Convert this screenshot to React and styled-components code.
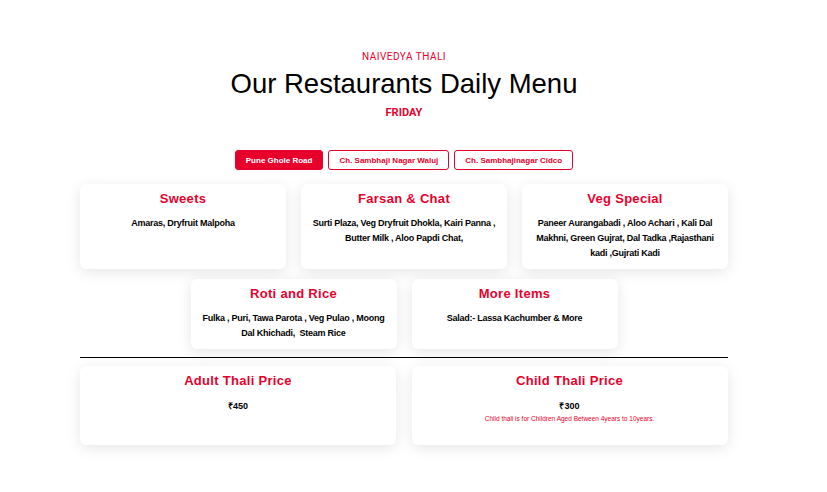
import React from "react";
import styled, { createGlobalStyle } from "styled-components";

const RED = "#e8002d";

const Global = createGlobalStyle`
  html, body { margin: 0; padding: 0; background: #fff; }
  body { font-family: "Liberation Sans", Arial, sans-serif; color: #000; }
`;

const Shell = styled.div`
  padding-right: 19px;
`;

const Page = styled.div`
  width: 648px;
  margin: 0 auto;
  padding-top: 51px;
  padding-bottom: 40px;
`;

const Header = styled.header`
  text-align: center;
`;

const Eyebrow = styled.div`
  font-family: Roboto, sans-serif;
  font-size: 10px;
  line-height: 12px;
  color: ${RED};
  letter-spacing: 0.5px;
`;

const Title = styled.h1`
  margin: 5px 0 0;
  font-family: "Liberation Sans", Arial, sans-serif;
  font-weight: 400;
  font-size: 27.5px;
  line-height: 32px;
`;

const Day = styled.div`
  margin-top: 6px;
  font-family: Roboto, sans-serif;
  font-weight: 700;
  font-size: 11px;
  line-height: 14px;
  color: ${RED};
`;

const Tabs = styled.nav`
  display: flex;
  justify-content: center;
  gap: 5px;
  margin-top: 30px;
`;

const Tab = styled.button`
  height: 20px;
  padding: 0 10px;
  border-radius: 3px;
  border: 1px solid ${RED};
  background: ${(p) => (p.$active ? RED : "#fff")};
  color: ${(p) => (p.$active ? "#fff" : RED)};
  font-family: "Liberation Sans", Arial, sans-serif;
  font-weight: 700;
  font-size: 8px;
  cursor: pointer;
`;

const Grid = styled.section`
  display: flex;
  flex-wrap: wrap;
  justify-content: center;
  gap: 10px 15px;
  margin-top: 14px;
`;

const Card = styled.article`
  box-sizing: border-box;
  width: ${(p) => p.$w}px;
  min-height: ${(p) => p.$h}px;
  padding: 6px 10px 8px;
  background: #fff;
  border-radius: 6px;
  box-shadow: 0 3px 14px rgba(0, 0, 0, 0.1);
  text-align: center;
`;

const CardTitle = styled.h3`
  margin: 0;
  font-family: "Liberation Sans", Arial, sans-serif;
  font-weight: 700;
  font-size: 13px;
  line-height: 17px;
  letter-spacing: 0.3px;
  color: ${RED};
`;

const Items = styled.p`
  margin: 9px 0 0;
  font-family: "Liberation Sans", Arial, sans-serif;
  font-weight: 700;
  font-size: 9px;
  line-height: 15px;
  letter-spacing: -0.25px;
  white-space: pre-wrap;
`;

const Divider = styled.hr`
  margin: 8px 0 8px;
  border: 0;
  border-top: 1px solid #000;
`;

const Prices = styled.section`
  display: grid;
  grid-template-columns: 1fr 1fr;
  gap: 15px;
`;

const Price = styled.div`
  margin-top: 11px;
  font-family: "Liberation Sans", Arial, sans-serif;
  font-weight: 700;
  font-size: 9px;
  line-height: 12px;
`;

const Note = styled.div`
  margin-top: 2px;
  font-family: "Liberation Sans", Arial, sans-serif;
  font-size: 6.5px;
  line-height: 10px;
  color: ${RED};
`;

const menu = [
  { t: "Sweets", d: "Amaras, Dryfruit Malpoha", h: 85 },
  { t: "Farsan & Chat", d: "Surti Plaza, Veg Dryfruit Dhokla, Kairi Panna , Butter Milk , Aloo Papdi Chat,", h: 85 },
  { t: "Veg Special", d: "Paneer Aurangabadi , Aloo Achari , Kali Dal Makhni, Green Gujrat, Dal Tadka ,Rajasthani kadi ,Gujrati Kadi", h: 85 },
  { t: "Roti and Rice", d: "Fulka , Puri, Tawa Parota , Veg Pulao , Moong Dal Khichadi,  Steam Rice", h: 70 },
  { t: "More Items", d: "Salad:- Lassa Kachumber & More", h: 70 },
];

export default function App() {
  return (
    <Shell>
      <Global />
      <Page>
        <Header>
          <Eyebrow>NAIVEDYA THALI</Eyebrow>
          <Title>Our Restaurants Daily Menu</Title>
          <Day>FRIDAY</Day>
        </Header>
        <Tabs>
          <Tab $active>Pune Ghole Road</Tab>
          <Tab>Ch. Sambhaji Nagar Waluj</Tab>
          <Tab>Ch. Sambhajinagar Cidco</Tab>
        </Tabs>
        <Grid>
          {menu.map((m) => (
            <Card key={m.t} $w={206} $h={m.h}>
              <CardTitle>{m.t}</CardTitle>
              <Items>{m.d}</Items>
            </Card>
          ))}
        </Grid>
        <Divider />
        <Prices>
          <Card $w={316} $h={79}>
            <CardTitle>Adult Thali Price</CardTitle>
            <Price>₹450</Price>
          </Card>
          <Card $w={316} $h={79}>
            <CardTitle>Child Thali Price</CardTitle>
            <Price>₹300</Price>
            <Note>Child thali is for Children Aged Between 4years to 10years.</Note>
          </Card>
        </Prices>
      </Page>
    </Shell>
  );
}
